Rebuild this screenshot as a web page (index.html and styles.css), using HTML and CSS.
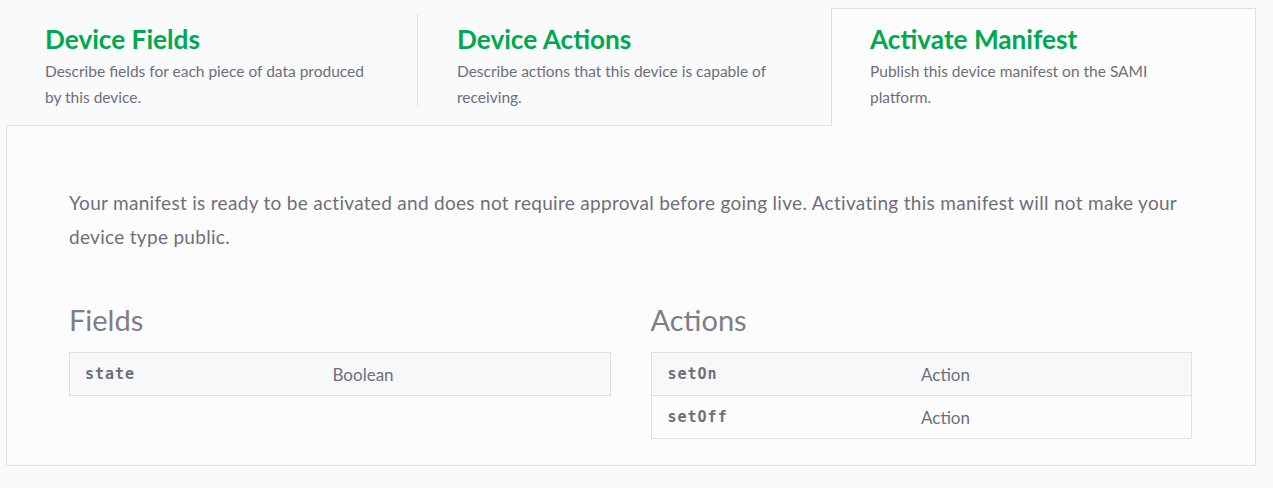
FILE: index.html
```html
<!DOCTYPE html>
<html lang="en">
<head>
<meta charset="utf-8">
<title>Activate Manifest</title>
<link rel="stylesheet" href="styles.css">
</head>
<body>
<div class="wrap">
  <div class="tabs">
    <div class="tab sep">
      <h2 class="tab-title">Device Fields</h2>
      <p class="tab-desc">Describe fields for each piece of data produced by this device.</p>
    </div>
    <div class="tab">
      <h2 class="tab-title">Device Actions</h2>
      <p class="tab-desc">Describe actions that this device is capable of receiving.</p>
    </div>
    <div class="tab active">
      <h2 class="tab-title">Activate Manifest</h2>
      <p class="tab-desc">Publish this device manifest on the SAMI platform.</p>
    </div>
  </div>
  <div class="panel">
    <p class="intro">Your manifest is ready to be activated and does not require approval before going live. Activating this manifest will not make your device type public.</p>
    <div class="cols">
      <div class="col">
        <h3 class="col-title">Fields</h3>
        <table class="tbl fields">
          <tr><td class="name">state</td><td class="type">Boolean</td></tr>
        </table>
      </div>
      <div class="col">
        <h3 class="col-title">Actions</h3>
        <table class="tbl actions">
          <tr><td class="name">setOn</td><td class="type">Action</td></tr>
          <tr><td class="name">setOff</td><td class="type">Action</td></tr>
        </table>
      </div>
    </div>
  </div>
</div>
</body>
</html>
```
FILE: styles.css
```css
html, body {
  margin: 0;
  padding: 0;
  background: #f9fafc;
}
body {
  font-family: Lato, "Open Sans", sans-serif;
  color: #6e6f7b;
}
.wrap {
  padding: 8px 17px 0 6px;
}
.tabs {
  display: flex;
  align-items: flex-start;
  position: relative;
  z-index: 1;
  margin-bottom: -1px;
}
.tab {
  width: 412px;
  box-sizing: border-box;
  padding: 15px 40px 0 39px;
}
.tab.sep {
  border-right: 1px solid #e2e3e6;
  margin-top: 6px;
  height: 93px;
  padding-top: 9px;
}
.tab.active {
  flex: 1;
  width: auto;
  background: #fcfcfc;
  border: 1px solid #dfe0e3;
  border-bottom: none;
  padding-top: 14px;
  padding-bottom: 16px;
  padding-left: 38px;
  margin-left: 1px;
}
.tab-title {
  margin: 0;
  font-size: 26.2px;
  line-height: 32px;
  font-weight: 700;
  color: #00a84f;
}
.tab-desc {
  margin: 3px 0 0;
  max-width: 330px;
  font-size: 15.5px;
  line-height: 26px;
  color: #6e6f7b;
}
.panel {
  background: #fcfcfc;
  border: 1px solid #dfe0e3;
  padding: 60px 63px 26px 62px;
}
.intro {
  margin: 0;
  font-size: 19px;
  letter-spacing: 0.3px;
  line-height: 34px;
  color: #6e6f7b;
}
.cols {
  display: flex;
  gap: 40px;
  margin-top: 48px;
}
.col {
  flex: 1;
}
.col-title {
  margin: 0 0 14px;
  font-size: 29px;
  line-height: 36px;
  font-weight: 400;
  color: #7d7e8a;
}
.tbl {
  width: 100%;
  table-layout: fixed;
  border-collapse: collapse;
  border: 1px solid #dde1e6;
}
.tbl td {
  height: 43px;
  box-sizing: border-box;
  padding: 0 15px;
  border-top: 1px solid #dde1e6;
  vertical-align: middle;
}
.tbl tr:nth-child(odd) td {
  background: #f7f8fa;
}
.tbl tr:nth-child(even) td {
  background: #fcfcfc;
}
.fields td.name { width: 248px; }
.actions td.name { width: 255px; padding-left: 16px; }
.name {
  font-family: "DejaVu Sans Mono", monospace;
  font-weight: 700;
  font-size: 15px;
  letter-spacing: 1px;
  color: #6e6f7b;
}
.type {
  font-size: 17px;
  color: #6e6f7b;
}
```
